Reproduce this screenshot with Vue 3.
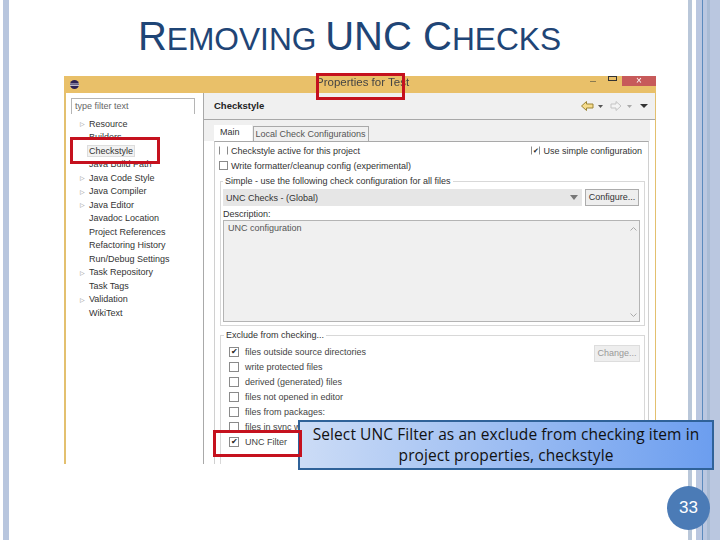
<script setup>
const tree = [
  { name: 'Resource', arrow: true },
  { name: 'Builders' },
  { name: 'Checkstyle', selected: true },
  { name: 'Java Build Path' },
  { name: 'Java Code Style', arrow: true },
  { name: 'Java Compiler', arrow: true },
  { name: 'Java Editor', arrow: true },
  { name: 'Javadoc Location' },
  { name: 'Project References' },
  { name: 'Refactoring History' },
  { name: 'Run/Debug Settings' },
  { name: 'Task Repository', arrow: true },
  { name: 'Task Tags' },
  { name: 'Validation', arrow: true },
  { name: 'WikiText' },
]

const excludes = [
  { name: 'files outside source directories', checked: true },
  { name: 'write protected files' },
  { name: 'derived (generated) files' },
  { name: 'files not opened in editor' },
  { name: 'files from packages:' },
  { name: 'files in sync with' },
  { name: 'UNC Filter', checked: true },
]
</script>

<template>
  <div class="slide">
    <h1 class="title">
      <span class="cap">R</span>EMOVING <span class="cap">UNC C</span>HECKS
    </h1>

    <div class="shot">
      <div class="titlebar">
        <svg class="logo" width="9" height="9" viewBox="0 0 9 9">
          <circle cx="4.5" cy="4.5" r="4.5" fill="#2c2255" />
          <rect x="0" y="3.6" width="9" height="0.7" fill="#fff" />
          <rect x="0" y="5" width="9" height="0.7" fill="#fff" />
        </svg>
        <span class="win-title">Properties for Test</span>
        <div class="win-controls">
          <span class="win-min"></span>
          <span class="win-max"></span>
          <span class="win-close">×</span>
        </div>
      </div>

      <div class="body">
        <div class="side">
          <div class="filter">type filter text</div>
          <ul class="tree">
            <li v-for="item in tree" :key="item.name" class="tree-row">
              <span class="tree-arrow">{{ item.arrow ? '▷' : '' }}</span>
              <span :class="{ 'tree-sel': item.selected }">{{ item.name }}</span>
            </li>
          </ul>
        </div>

        <div class="main">
          <div class="main-head">
            <b>Checkstyle</b>
            <svg width="68" height="12" viewBox="0 0 68 12">
              <path d="M0.500 6 L5.500 1.500 V4 H12 V8 H5.500 V10.500 Z" fill="#f6dc8c" stroke="#9c8436" stroke-width="1" />
              <path d="M17 5 H22 L19.500 8 Z" fill="#555" />
              <path d="M40 6 L35 1.500 V4 H30 V8 H35 V10.500 Z" fill="#f4f4f4" stroke="#c4c4c4" stroke-width="1" />
              <path d="M46 5 H51 L48.500 8 Z" fill="#aaa" />
              <path d="M59 4 H67 L63 8 Z" fill="#333" />
            </svg>
          </div>

          <div class="tabs">
            <span class="tab tab-on">Main</span>
            <span class="tab">Local Check Configurations</span>
          </div>

          <div class="panel">
            <div class="opt-row opt-split">
              <label class="opt"><i class="box box-bare"></i>Checkstyle active for this project</label>
              <label class="opt"><i class="box box-bare">✔</i>Use simple configuration</label>
            </div>
            <label class="opt opt-second"><i class="box"></i>Write formatter/cleanup config (experimental)</label>

            <fieldset class="group group-simple">
              <legend>Simple - use the following check configuration for all files</legend>
              <div class="combo-row">
                <div class="combo">
                  <span>UNC Checks - (Global)</span>
                  <svg width="8" height="5" viewBox="0 0 8 5"><path d="M0 0 H8 L4 5 Z" fill="#777" /></svg>
                </div>
                <span class="btn">Configure...</span>
              </div>
              <div class="desc-label">Description:</div>
              <div class="desc">
                <span>UNC configuration</span>
                <div class="scroll">
                  <svg width="7" height="4" viewBox="0 0 7 4"><path d="M0.500 3.500 L3.500 0.500 L6.500 3.500" fill="none" stroke="#aaa" /></svg>
                  <svg width="7" height="4" viewBox="0 0 7 4"><path d="M0.500 0.500 L3.500 3.500 L6.500 0.500" fill="none" stroke="#aaa" /></svg>
                </div>
              </div>
            </fieldset>

            <fieldset class="group group-exclude">
              <legend>Exclude from checking...</legend>
              <span class="btn btn-off">Change...</span>
              <label v-for="row in excludes" :key="row.name" class="exc-row">
                <i class="box">{{ row.checked ? '✔' : '' }}</i>{{ row.name }}
              </label>
            </fieldset>
          </div>
        </div>
      </div>
    </div>

    <div class="callout">Select UNC Filter as an exclude from checking item in project properties, checkstyle</div>

    <span class="mark mark-title"></span>
    <span class="mark mark-tree"></span>
    <span class="mark mark-filter"></span>

    <div class="page-num">33</div>
  </div>
</template>

<style>
html, body { margin: 0; background: #fff; }
</style>

<style scoped>
.slide {
  position: relative;
  width: 720px;
  height: 540px;
  overflow: hidden;
  font-family: "Liberation Sans", Arial, sans-serif;
  background:
    linear-gradient(to right,
      #fff 0 3px, #b8c6de 3px 9px, #fff 9px 688px,
      #b9c7d9 688px 692px, #fff 692px 696px,
      #bac7e0 696px 702px, #5b8abd 702px 703px, #bac7e0 703px 707px,
      #a9bbd4 707px 710px, #bac7e0 710px 720px);
}

.title {
  margin: 0;
  padding-top: 13px;
  height: 62px;
  box-sizing: border-box;
  width: 699px;
  text-align: center;
  font-size: 31.7px;
  line-height: 46px;
  font-weight: 400;
  color: #1f4576;
  white-space: nowrap;
}
.cap { font-size: 40px; }

.shot {
  margin-left: 64px;
  margin-top: 14px;
  width: 592px;
  height: 388px;
  display: flex;
  flex-direction: column;
  box-sizing: border-box;
  color: #333;
  font-size: 9px;
  filter: blur(0.35px);
}

.titlebar {
  height: 17px;
  flex: none;
  background: #e9c069;
  display: flex;
  align-items: center;
  padding-left: 6px;
  position: relative;
}
.logo { flex: none; }
.win-title {
  margin-left: 237px;
  margin-top: -5px;
  font-size: 11.5px;
  color: #444;
}
.win-controls {
  margin-left: auto;
  display: flex;
  align-items: flex-start;
  height: 100%;
}
.win-min { width: 6px; height: 1px; background: #8a7a50; margin-top: 5px; margin-right: 12px; }
.win-max { width: 7px; height: 3px; border: 1px solid #333; border-top-width: 1px; margin-right: 5px; }
.win-close {
  width: 34px;
  height: 10px;
  background: #c75a5a;
  color: #fff;
  font-size: 10px;
  line-height: 9px;
  text-align: center;
}

.body {
  flex: 1;
  min-height: 0;
  display: flex;
  border-left: 2px solid #e3c06f;
  border-right: 1px solid #e3c06f;
}

.side {
  width: 138px;
  flex: none;
  box-sizing: border-box;
  background: #fff;
  border-right: 1px solid #a9a9a9;
  padding: 5px 8px 0 5px;
}
.filter {
  height: 15px;
  line-height: 15px;
  padding-left: 3px;
  border: 1px solid #b5b5b5;
  border-bottom: none;
  color: #666;
}
.tree { list-style: none; margin: 3px 0 0; padding: 0; }
.tree-row {
  display: flex;
  align-items: center;
  height: 13.5px;
  white-space: nowrap;
}
.tree-arrow {
  width: 18px;
  flex: none;
  padding-left: 9px;
  box-sizing: border-box;
  font-size: 6px;
  color: #888;
}
.tree-sel {
  background: #f2f2f2;
  border: 1px solid #ddd;
  padding: 0 1px;
  margin-left: -2px;
}

.main { flex: 1; min-width: 0; display: flex; flex-direction: column; background: #fff; }
.main-head {
  height: 27px;
  flex: none;
  box-sizing: border-box;
  background: #f0f0f0;
  border-bottom: 1px solid #a8a8a8;
  display: flex;
  align-items: center;
  justify-content: space-between;
  padding: 0 6px 1px 10px;
}
.main-head b { font-size: 9.5px; color: #222; }

.tabs {
  flex: none;
  display: flex;
  align-items: flex-end;
  background: #f0f0f0;
  height: 21px;
  padding-left: 10px;
  box-sizing: border-box;
  margin-right: 5px;
}
.tab {
  height: 14px;
  line-height: 14px;
  padding: 0 2px;
  background: #f0f0f0;
  border: 1px solid #a9a9a9;
  border-bottom: none;
  color: #555;
}
.tab-on {
  height: 16px;
  padding: 0 12px 0 6px;
  background: #fff;
  border: none;
  margin-right: 1px;
  color: #333;
}

.panel {
  flex: 1;
  min-height: 0;
  margin: 0 6px 0 10px;
  border-top: 1px solid #a9a9a9;
  border-left: 1px solid #d0d0d0;
  border-right: 1px solid #d0d0d0;
  padding: 1px 0 0 4px;
  background: #fff;
  box-sizing: border-box;
  overflow: hidden;
}

.opt-row { display: flex; justify-content: space-between; padding-right: 6px; }
.opt { display: flex; align-items: center; height: 15px; white-space: nowrap; }
.opt-second { margin-bottom: 3px; }

.box {
  display: inline-block;
  width: 9px;
  height: 9px;
  margin-right: 3px;
  box-sizing: border-box;
  border: 1px solid #8a8a8a;
  font-style: normal;
  font-size: 7px;
  line-height: 7px;
  text-align: center;
  color: #222;
  flex: none;
}
.box-bare { border-top-color: transparent; border-bottom-color: transparent; }

.group {
  margin: 0 3px 0 1px;
  padding: 0 4px 0 2px;
  border: 1px solid #d8d8d8;
  min-width: 0;
  box-sizing: border-box;
}
.group legend { padding: 0 2px; margin-left: 0; line-height: 11px; white-space: nowrap; }
.group-simple { height: 150px; margin-bottom: 4px; }
.group-exclude { position: relative; height: 140px; padding-left: 8px; padding-top: 3px; }
.group-exclude legend { margin-left: -5px; }

.combo-row { display: flex; gap: 3px; margin-top: 2px; }
.combo {
  flex: 1;
  height: 17px;
  background: #e6e6e6;
  display: flex;
  align-items: center;
  justify-content: space-between;
  padding: 0 4px 0 3px;
}
.btn {
  display: inline-block;
  box-sizing: border-box;
  height: 17px;
  line-height: 15px;
  width: 54px;
  text-align: center;
  background: #eee;
  border: 1px solid #acacac;
  margin-right: 1px;
}
.btn-off {
  position: absolute;
  top: 4px;
  right: 0;
  width: 46px;
  margin-right: 4px;
  border-color: #ddd;
  color: #999;
}
.desc-label { margin-top: 2px; line-height: 12px; }
.desc {
  height: 102px;
  margin: 0;
  background: #f0f0f0;
  border: 1px solid #b4b4b4;
  box-sizing: border-box;
  padding: 2px 0 0 4px;
  display: flex;
  justify-content: space-between;
  color: #555;
}
.scroll {
  width: 11px;
  display: flex;
  flex-direction: column;
  justify-content: space-between;
  align-items: center;
  padding: 4px 0;
  box-sizing: border-box;
}

.exc-row {
  display: flex;
  align-items: center;
  height: 15px;
  white-space: nowrap;
  color: #444;
}
.exc-row .box { width: 10px; height: 10px; margin-right: 6px; line-height: 8px; font-size: 8px; }

.mark {
  position: absolute;
  box-sizing: border-box;
  border: 3px solid #c5111e;
}
.mark-title { left: 316px; top: 73px; width: 89px; height: 27px; }
.mark-tree { left: 70px; top: 137px; width: 90px; height: 27px; }
.mark-filter { left: 213px; top: 430px; width: 89px; height: 27px; }

.callout {
  position: absolute;
  left: 298px;
  top: 420px;
  width: 416px;
  height: 50px;
  box-sizing: border-box;
  border: 2px solid #2f6299;
  padding: 2px 4px 0;
  background: linear-gradient(to right, #ccdcf6, #6c9eef);
  font-family: "Open Sans", sans-serif;
  font-size: 15.5px;
  letter-spacing: 0.08px;
  line-height: 21px;
  color: #111;
  text-align: center;
}

.page-num {
  position: absolute;
  left: 667px;
  top: 486px;
  width: 43px;
  height: 44px;
  border-radius: 50%;
  background: #4b7bb6;
  color: #fff;
  font-size: 17px;
  line-height: 44px;
  text-align: center;
}
</style>
